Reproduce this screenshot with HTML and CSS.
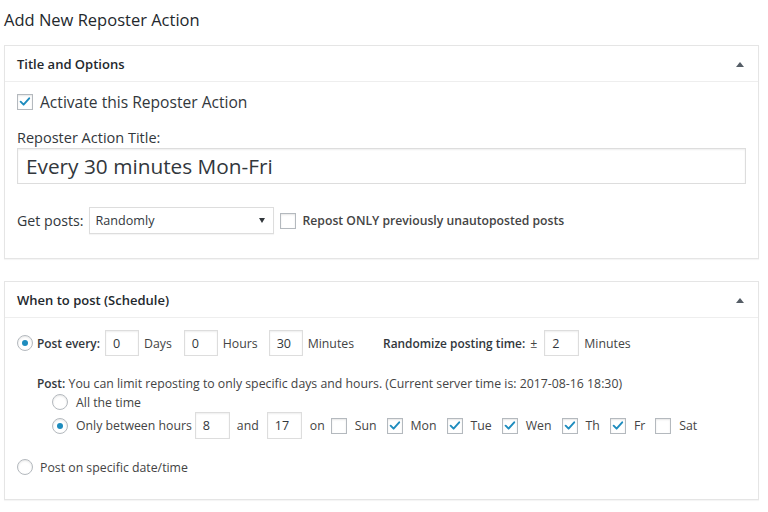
FILE: index.html
```html
<!DOCTYPE html>
<html lang="en">
<head>
<meta charset="utf-8">
<title>Add New Reposter Action</title>
<link rel="stylesheet" href="styles.css">
</head>
<body>
<h1 class="page-title">Add New Reposter Action</h1>

<section class="box">
  <header class="box-head">
    <h2 class="box-title">Title and Options</h2>
    <span class="toggle"></span>
  </header>
  <div class="box-body opts">
    <label class="activate">
      <span class="cb checked"><svg viewBox="0 0 16 16" width="14" height="14"><path d="M3 7.6 L6.4 11 L12.8 3.8" fill="none" stroke="#1e8cbe" stroke-width="2.2" stroke-linecap="round" stroke-linejoin="round"/></svg></span>
      <span>Activate this Reposter Action</span>
    </label>
    <div class="field-label">Reposter Action Title:</div>
    <div class="title-input">Every 30 minutes Mon-Fri</div>
    <div class="get-posts">
      <span class="gp-label">Get posts:</span>
      <span class="select"><span>Randomly</span><span class="arrow"></span></span>
      <span class="cb"></span>
      <span class="strong-label">Repost ONLY previously unautoposted posts</span>
    </div>
  </div>
</section>

<section class="box">
  <header class="box-head">
    <h2 class="box-title">When to post (Schedule)</h2>
    <span class="toggle"></span>
  </header>
  <div class="box-body sched">
    <div class="row r-every">
      <span class="radio checked"></span>
      <b class="b every-lbl">Post every:</b>
      <span class="num w34">0</span><span class="unit u-days">Days</span>
      <span class="num w34">0</span><span class="unit u-hours">Hours</span>
      <span class="num w34">30</span><span class="unit u-min">Minutes</span>
      <b class="b rand-lbl">Randomize posting time:</b><span class="pm">±</span>
      <span class="num w35">2</span><span class="unit">Minutes</span>
    </div>
    <div class="limit-note"><b class="b">Post:</b> You can limit reposting to only specific days and hours. (Current server time is: 2017-08-16 18:30)</div>
    <div class="row r-all">
      <span class="radio"></span><span class="opt-text">All the time</span>
    </div>
    <div class="row r-between">
      <span class="radio checked"></span><span class="opt-text">Only between hours</span>
      <span class="num w35 h27 g-a">8</span><span class="unit g-and">and</span>
      <span class="num w35 h27 g-a">17</span><span class="unit g-on">on</span>
      <span class="cb"></span><span class="day">Sun</span>
      <span class="cb checked"><svg viewBox="0 0 16 16" width="14" height="14"><path d="M3 7.6 L6.4 11 L12.8 3.8" fill="none" stroke="#1e8cbe" stroke-width="2.2" stroke-linecap="round" stroke-linejoin="round"/></svg></span><span class="day">Mon</span>
      <span class="cb checked"><svg viewBox="0 0 16 16" width="14" height="14"><path d="M3 7.6 L6.4 11 L12.8 3.8" fill="none" stroke="#1e8cbe" stroke-width="2.2" stroke-linecap="round" stroke-linejoin="round"/></svg></span><span class="day">Tue</span>
      <span class="cb checked"><svg viewBox="0 0 16 16" width="14" height="14"><path d="M3 7.6 L6.4 11 L12.8 3.8" fill="none" stroke="#1e8cbe" stroke-width="2.2" stroke-linecap="round" stroke-linejoin="round"/></svg></span><span class="day">Wen</span>
      <span class="cb checked"><svg viewBox="0 0 16 16" width="14" height="14"><path d="M3 7.6 L6.4 11 L12.8 3.8" fill="none" stroke="#1e8cbe" stroke-width="2.2" stroke-linecap="round" stroke-linejoin="round"/></svg></span><span class="day">Th</span>
      <span class="cb checked"><svg viewBox="0 0 16 16" width="14" height="14"><path d="M3 7.6 L6.4 11 L12.8 3.8" fill="none" stroke="#1e8cbe" stroke-width="2.2" stroke-linecap="round" stroke-linejoin="round"/></svg></span><span class="day">Fr</span>
      <span class="cb"></span><span class="day">Sat</span>
    </div>
    <div class="row r-specific">
      <span class="radio"></span><span class="opt-text">Post on specific date/time</span>
    </div>
  </div>
</section>
</body>
</html>
```
FILE: styles.css
```css
html, body { background: #fff; }
body {
  margin: 0;
  padding: 0 9px 20px 4px;
  font-family: "Open Sans", "Noto Sans", sans-serif;
  font-size: 12.3px;
  color: #444;
}
.page-title {
  margin: 9px 0 14px;
  font-size: 16.5px;
  line-height: 22px;
  font-weight: 400;
  color: #23282d;
}
.box {
  border: 1px solid #e5e5e5;
  background: #fff;
  box-shadow: 0 1px 1px rgba(0,0,0,.04);
}
.box + .box { margin-top: 22px; }
.box-head {
  height: 34px;
  border-bottom: 1px solid #eee;
  display: flex;
  align-items: center;
  justify-content: space-between;
  padding: 1px 14px 0 12px;
  box-sizing: content-box;
}
.box-title {
  margin: 0;
  font-size: 13px;
  font-weight: 600;
  color: #23282d;
}
.toggle {
  width: 0; height: 0;
  border-left: 4px solid transparent;
  border-right: 4px solid transparent;
  border-bottom: 5px solid #555d66;
}
.box-body { padding: 0 12px; }
.opts { padding-top: 8px; padding-bottom: 24px; }
.sched { padding-top: 12px; padding-bottom: 23px; }

.cb {
  box-sizing: border-box;
  width: 16px; height: 16px;
  flex: none;
  border: 1px solid #b4b9be;
  background: #fff;
  box-shadow: inset 0 1px 2px rgba(0,0,0,.1);
  display: inline-flex;
  align-items: center;
  justify-content: center;
}
.radio {
  box-sizing: border-box;
  width: 16px; height: 16px;
  flex: none;
  border: 1px solid #b4b9be;
  border-radius: 50%;
  background: #fff;
  box-shadow: inset 0 1px 2px rgba(0,0,0,.1);
  display: inline-flex;
  align-items: center;
  justify-content: center;
}
.radio.checked::after {
  content: "";
  width: 6px; height: 6px;
  border-radius: 50%;
  background: #1e8cbe;
}

.activate {
  display: flex;
  align-items: center;
  height: 24px;
  font-size: 15.6px;
  color: #32373c;
}
.activate .cb { margin-right: 7px; }
.field-label {
  margin-top: 14px;
  line-height: 20px;
  font-size: 14.5px;
  color: #32373c;
}
.title-input {
  box-sizing: border-box;
  height: 36px;
  border: 1px solid #ddd;
  box-shadow: inset 0 1px 2px rgba(0,0,0,.07);
  padding-left: 8px;
  display: flex;
  align-items: center;
  font-size: 20.8px;
  color: #32373c;
}
.get-posts {
  margin-top: 23px;
  height: 27px;
  display: flex;
  align-items: center;
}
.gp-label { font-size: 14.2px; color: #32373c; margin-right: 5px; }
.select {
  box-sizing: border-box;
  width: 185px; height: 27px;
  border: 1px solid #ddd;
  box-shadow: 0 1px 1px rgba(0,0,0,.04);
  display: flex;
  align-items: center;
  justify-content: space-between;
  padding: 0 6px;
  font-size: 12.6px;
  color: #32373c;
  margin-right: 6px;
}
.arrow {
  width: 0; height: 0;
  border-left: 3px solid transparent;
  border-right: 3px solid transparent;
  border-top: 5px solid #32373c;
  margin-right: 2px;
}
.get-posts .cb { margin-right: 7px; }
.strong-label { font-size: 12.2px; font-weight: 600; color: #444; }

.row { display: flex; align-items: center; }
.b { font-weight: 600; color: #32373c; font-size: 11.9px; }
.num {
  box-sizing: border-box;
  height: 26px;
  border: 1px solid #ddd;
  box-shadow: inset 0 1px 2px rgba(0,0,0,.07);
  display: inline-flex;
  align-items: center;
  padding-left: 7px;
  color: #32373c;
  font-size: 12.6px;
  flex: none;
}
.w34 { width: 34px; }
.w35 { width: 35px; }
.h27 { height: 27px; }

.r-every { height: 26px; }
.r-every .radio { margin-right: 4px; }
.every-lbl { margin-right: 5px; }
.unit { margin-left: 5px; }
.u-days { margin-right: 12px; }
.u-hours { margin-right: 11px; }
.u-min { margin-right: 29px; }
.pm { margin: 0 7px 0 5px; }

.limit-note {
  margin: 18px 0 0 20px;
  line-height: 18px;
}
.r-all { margin-left: 35px; height: 18px; }
.r-all .radio, .r-between .radio { margin-right: 8px; }
.r-between { margin: 1px 0 0 35px; height: 27px; }
.opt-text { white-space: nowrap; }
.r-between .opt-text { margin-right: 3px; }
.g-and { margin: 0 8px 0 7px; }
.g-on { margin: 0 6px 0 8px; }
.day { margin: 0 10px 0 8px; }
.r-specific { margin-top: 19px; height: 18px; }
.r-specific .radio { margin-right: 7px; }
```
